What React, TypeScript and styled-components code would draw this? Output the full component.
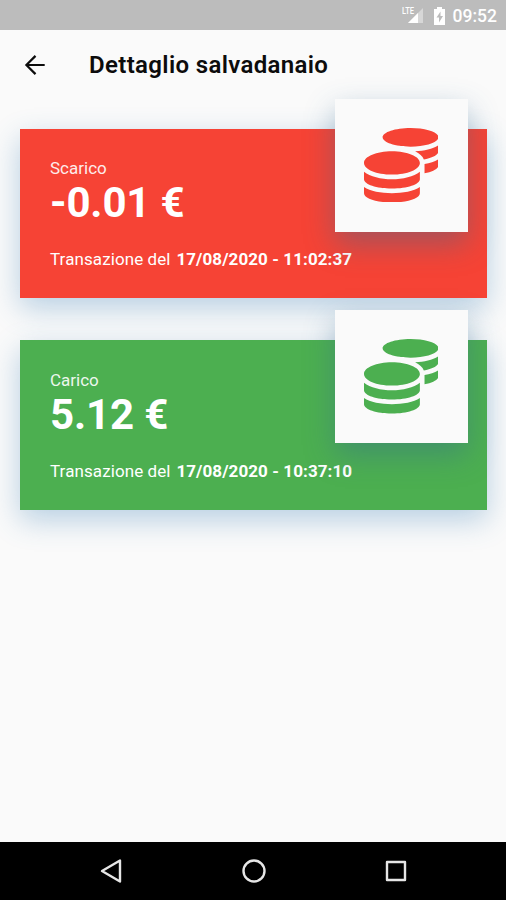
import styled, { createGlobalStyle } from 'styled-components';
import { FaCoins } from 'react-icons/fa';

const GlobalStyle = createGlobalStyle`
  * {
    box-sizing: border-box;
  }
  body {
    margin: 0;
    background-color: #fafafa;
    font-family: Roboto, 'Liberation Sans', sans-serif;
  }
`;

const Screen = styled.div`
  display: flex;
  flex-direction: column;
  height: 900px;
  overflow: hidden;
  background-color: #fafafa;
`;

const StatusBar = styled.div`
  display: flex;
  flex: none;
  justify-content: flex-end;
  align-items: center;
  height: 30px;
  padding: 2px 9px 0 0;
  background-color: #bcbcbc;
  color: white;
`;

const Clock = styled.span`
  margin-left: 8px;
  font-size: 17.5px;
  font-weight: 500;
  line-height: 20px;
`;

const AppBar = styled.header`
  display: flex;
  flex: none;
  align-items: center;
  height: 70px;
  padding-left: 21px;
  color: #0c0c0c;
`;

const Title = styled.h1`
  margin: 0 0 0 39px;
  font-size: 24px;
  font-weight: 600;
  line-height: 30px;
  letter-spacing: 0.35px;
`;

const CardList = styled.main`
  display: flex;
  flex: 1;
  flex-direction: column;
  gap: 42.2px;
  padding: 28.5px 19px 0 20px;
`;

const Card = styled.section<{ $color: string }>`
  position: relative;
  height: 169.5px;
  padding: 29.4px 30px 0;
  background-color: ${({ $color }) => $color};
  color: white;
  box-shadow: 0 10px 28px rgba(50, 120, 180, 0.33);
`;

const CardLabel = styled.div`
  font-size: 17px;
  line-height: 21px;
  opacity: 0.9;
`;

const Amount = styled.div`
  margin-top: -1px;
  font-size: 42px;
  font-weight: 700;
  line-height: 49px;
  letter-spacing: -0.15px;
`;

const Transaction = styled.div`
  margin-top: 22px;
  font-size: 17px;
  line-height: 20px;
  letter-spacing: 0.09px;
  white-space: pre;

  b {
    margin-left: 1.5px;
  }
`;

const CoinTile = styled.div<{ $color: string }>`
  position: absolute;
  top: -30px;
  right: 19.5px;
  display: flex;
  justify-content: center;
  align-items: center;
  width: 133px;
  height: 133px;
  background-color: #fafafa;
  color: ${({ $color }) => $color};
  box-shadow: 0 12px 28px rgba(50, 105, 145, 0.42);
`;

const NavBar = styled.nav`
  display: flex;
  flex: none;
  justify-content: space-between;
  align-items: center;
  height: 58.5px;
  padding: 0 96px 0 97px;
  background-color: black;
`;

const BackArrow = () => (
  <svg width="29" height="29" viewBox="0 0 29 29" fill="none" stroke="currentColor" strokeWidth="2.2">
    <path d="M23.700 14H6M14.500 4.900L5.400 14l9.100 9.100" />
  </svg>
);

const SignalIcon = () => (
  <svg width="23" height="20" viewBox="0 0 23 20">
    <path d="M21 2v15H6z" fill="white" opacity="0.4" />
    <path d="M16 7v10H6z" fill="white" />
    <text x="0" y="8" fill="white" fontSize="9" fontWeight="500" textLength="12" lengthAdjust="spacingAndGlyphs">
      LTE
    </text>
  </svg>
);

const BatteryIcon = styled.svg`
  margin-left: 9px;
`;

const NavIcon = ({ children }: { children: React.ReactNode }) => (
  <svg width="28" height="28" viewBox="0 0 28 28" fill="none" stroke="#e6e6e6" strokeWidth="2.4" strokeLinejoin="round">
    {children}
  </svg>
);

interface Movement {
  label: string;
  amount: string;
  date: string;
  color: string;
}

const movements: Movement[] = [
  { label: 'Scarico', amount: '-0.01 €', date: '17/08/2020 - 11:02:37', color: '#f64335' },
  { label: 'Carico', amount: '5.12 €', date: '17/08/2020 - 10:37:10', color: '#4caf50' },
];

const MovementCard = ({ label, amount, date, color }: Movement) => (
  <Card $color={color}>
    <CardLabel>{label}</CardLabel>
    <Amount>{amount}</Amount>
    <Transaction>
      Transazione del <b>{date}</b>
    </Transaction>
    <CoinTile $color={color}>
      <FaCoins size={74.5} />
    </CoinTile>
  </Card>
);

const App = () => (
  <>
    <GlobalStyle />
    <Screen>
      <StatusBar>
        <SignalIcon />
        <BatteryIcon width="11" height="18" viewBox="0 0 11 18">
          <path d="M3 0h5v2h3v16H0V2h3z" fill="white" />
          <path d="M6.500 4.500L2.500 10.500H5v5l4-6.500H6.500z" fill="#bcbcbc" />
        </BatteryIcon>
        <Clock>09:52</Clock>
      </StatusBar>
      <AppBar>
        <BackArrow />
        <Title>Dettaglio salvadanaio</Title>
      </AppBar>
      <CardList>
        {movements.map((movement) => (
          <MovementCard key={movement.date} {...movement} />
        ))}
      </CardList>
      <NavBar>
        <NavIcon>
          <path d="M5 14L23 3.500v21z" />
        </NavIcon>
        <NavIcon>
          <circle cx="14" cy="14" r="10.500" />
        </NavIcon>
        <NavIcon>
          <rect x="5" y="5" width="18" height="18" />
        </NavIcon>
      </NavBar>
    </Screen>
  </>
);

export default App;
